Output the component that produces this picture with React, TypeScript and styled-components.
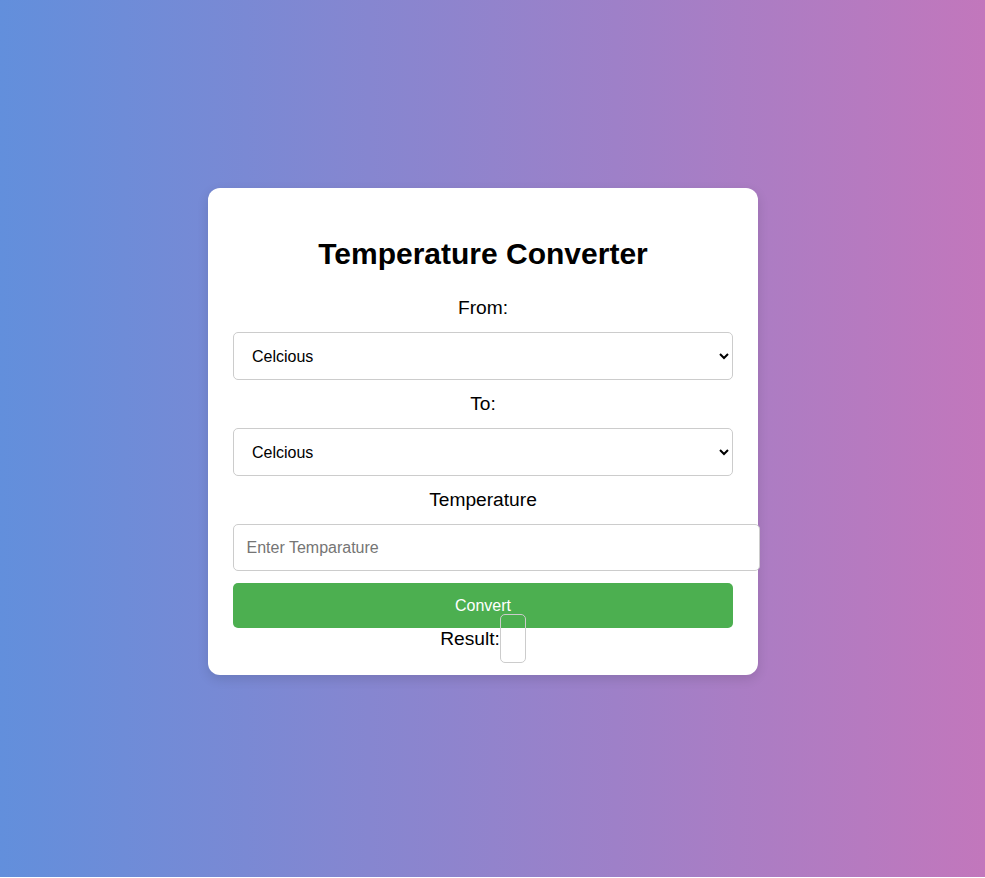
import React from "react";
import styled, { createGlobalStyle } from "styled-components";

const GlobalStyle = createGlobalStyle`
  html, body {
    margin: 0;
    padding: 0;
  }
  body {
    font-family: "Liberation Sans", Arial, sans-serif;
    background: #ffffff;
  }
`;

const Page = styled.div`
  height: 877px;
  background: linear-gradient(to right, #628fdc, #c277bc);
  display: flex;
  justify-content: flex-start;
  align-items: flex-start;
  padding: 188px 0 0 208px;
  box-sizing: border-box;
`;

const Card = styled.div`
  width: 550px;
  box-sizing: border-box;
  background: #ffffff;
  border-radius: 12px;
  padding: 25px;
  box-shadow: 0 4px 12px rgba(0, 0, 0, 0.12);
  display: flex;
  flex-direction: column;
  text-align: center;
`;

const Title = styled.h1`
  margin: 24px 0 26px;
  font-size: 30px;
  font-weight: bold;
  color: #000;
`;

const Label = styled.label`
  display: block;
  font-size: 19.2px;
  line-height: 22px;
  margin-bottom: 13px;
  color: #000;
`;

const Select = styled.select`
  width: 100%;
  height: 48px;
  padding: 0 14px;
  font-family: "Liberation Sans", Arial, sans-serif;
  font-size: 16px;
  border: 1px solid #cccccc;
  border-radius: 5px;
  background: #fff;
  color: #000;
  margin-bottom: 13px;
`;

const Input = styled.input`
  width: 100%;
  padding: 13.5px 12.5px;
  font-family: "Liberation Sans", Arial, sans-serif;
  font-size: 16px;
  border: 1px solid #cccccc;
  border-radius: 5px;
  margin-bottom: 12px;
  &::placeholder {
    color: #757575;
  }
`;

const Button = styled.button`
  width: 100%;
  height: 45px;
  background: #4caf50;
  color: #fff;
  border: none;
  border-radius: 5px;
  font-family: "Liberation Sans", Arial, sans-serif;
  font-size: 16px;
  cursor: pointer;
`;

const ResultLine = styled.div`
  font-size: 19.2px;
  line-height: 22px;
  color: #000;
`;

const ResultBox = styled.span`
  display: inline;
  padding: 13px 12px;
  border: 1px solid #cccccc;
  border-radius: 5px;
`;

export default function App() {
  return (
    <>
      <GlobalStyle />
      <Page>
        <Card>
          <Title>Temperature Converter</Title>
          <Label htmlFor="from">From:</Label>
          <Select id="from" defaultValue="c">
            <option value="c">Celcious</option>
            <option value="f">Fahrenheit</option>
            <option value="k">Kelvin</option>
          </Select>
          <Label htmlFor="to">To:</Label>
          <Select id="to" defaultValue="c">
            <option value="c">Celcious</option>
            <option value="f">Fahrenheit</option>
            <option value="k">Kelvin</option>
          </Select>
          <Label htmlFor="temp">Temperature</Label>
          <Input id="temp" type="number" placeholder="Enter Temparature" />
          <Button>Convert</Button>
          <ResultLine>
            Result:<ResultBox></ResultBox>
          </ResultLine>
        </Card>
      </Page>
    </>
  );
}
